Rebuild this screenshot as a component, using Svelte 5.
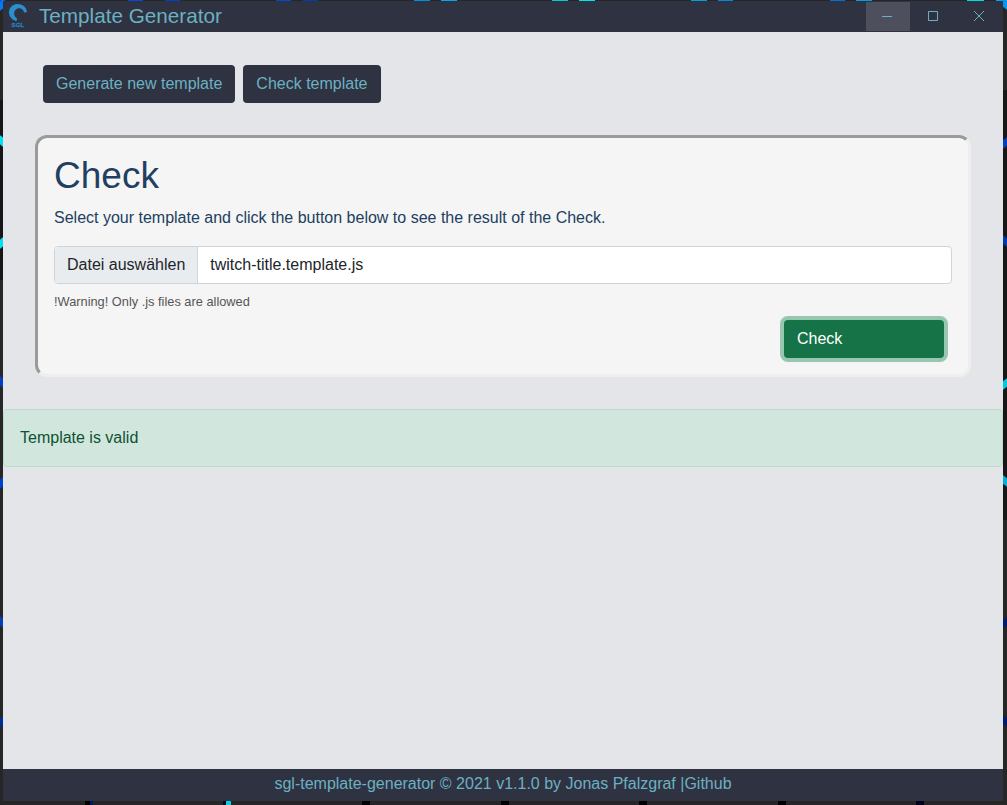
<script>
  const topGlows = [
    [0, 5, '#0a4fe0'], [128, 15, '#0048e0'], [165, 15, '#0040c8'],
    [276, 15, '#0048d8'], [303, 15, '#003cae'], [414, 16, '#0090e0'], [441, 16, '#00a8ec'],
    [552, 16, '#00c8e0'], [579, 16, '#00e4e8'], [691, 16, '#00a0e0'], [718, 15, '#0088dc'],
    [830, 15, '#0070d8'], [856, 16, '#00a0e0'], [967, 17, '#00dce0'], [996, 11, '#00a8f0']
  ];
  const leftGlows = [
    [5, '#0878f0', 1], [141, '#00e0f0', -1], [243, '#00e0f0', 1], [382, '#0040c8', -1],
    [483, '#0040d0', 1], [622, '#0040c0', -1], [722, '#002c98', 1]
  ];
  const rightGlows = [
    [4, '#0098f0', -1], [143, '#0040c0', 1], [241, '#0038b0', -1], [384, '#00c8e0', 1],
    [481, '#00b0d8', -1], [623, '#001c70', 1], [721, '#001c70', -1]
  ];
  const bottomGlows = [
    [85, 5, '#000'], [90, 3, '#001c60'], [223, 3, '#000c20'], [226, 5, '#00d0e0'],
    [362, 8, '#000'], [501, 8, '#000'], [639, 8, '#000'], [778, 8, '#000'], [916, 8, '#00001c']
  ];
  let fileName = 'twitch-title.template.js';
</script>

<div class="desktop">
  <svg class="wallpaper" viewBox="0 0 1007 805" aria-hidden="true">
    <rect width="1007" height="805" fill="#262626" />
    <rect x="0" y="100" width="3" height="180" fill="#161616" />
    <rect x="1003" y="90" width="4" height="430" fill="#171717" />
    {#each topGlows as [x, w, color]}
      <rect {x} y="0" width={w} height="1" fill={color} />
    {/each}
    {#each leftGlows as [y, color, d]}
      <path d={`M-2 ${y + 3 * d}L5 ${y - 3 * d}`} stroke={color} stroke-width="7" />
    {/each}
    {#each rightGlows as [y, color, d]}
      <path d={`M1001 ${y + 3 * d}L1009 ${y - 3 * d}`} stroke={color} stroke-width="7" />
    {/each}
    {#each bottomGlows as [x, w, color]}
      <rect {x} y="801" width={w} height="4" fill={color} />
    {/each}
  </svg>

  <div class="window">
    <header>
      <svg class="logo" viewBox="0 0 20 26" aria-hidden="true">
        <path d="M19 9.2 16.2 9.6 15 7 12.4 5.2 9.2 5.4 6.8 7.4 6 10.4 6.9 13.4 9.1 15.6 8.4 18.2 4.6 16.4 1.8 13.2 .8 9.4 1.7 5.6 4.4 2.6 8 1.1 12 1.2 15.6 2.8 18 5.6Z" fill="#2c8fcc" />
        <text x="3.6" y="24.4" textLength="12.8" lengthAdjust="spacingAndGlyphs">SGL</text>
      </svg>
      <span class="title">Template Generator</span>
      <div class="controls">
        <button class="active" aria-label="Minimize"><svg viewBox="0 0 10 10"><path d="M0 5.5H10" /></svg></button>
        <button aria-label="Maximize"><svg viewBox="0 0 10 10"><path d="M.5.5H9.5V9.5H.5Z" /></svg></button>
        <button aria-label="Close"><svg viewBox="0 0 10 10"><path d="M0 0 10 10M10 0 0 10" /></svg></button>
      </div>
    </header>

    <main>
      <nav>
        <button class="btn">Generate new template</button>
        <button class="btn">Check template</button>
      </nav>

      <section>
        <h1>Check</h1>
        <p>Select your template and click the button below to see the result of the Check.</p>
        <div class="file">
          <span class="choose">Datei auswählen</span>
          <span class="name">{fileName}</span>
        </div>
        <div class="hint">!Warning! Only .js files are allowed</div>
        <button class="btn submit">Check</button>
      </section>

      <div class="alert">Template is valid</div>
    </main>

    <footer>sgl-template-generator © 2021 v1.1.0 by Jonas Pfalzgraf |<span>Github</span></footer>
  </div>
</div>

<style>
  :global(body) { margin: 0; overflow: hidden; }
  .desktop {
    position: relative;
    box-sizing: border-box;
    width: 1007px;
    height: 805px;
    padding: 1px 4px 4px 3px;
    font: 16px/24px "Liberation Sans", Arial, sans-serif;
  }
  .wallpaper { position: absolute; inset: 0; width: 1007px; height: 805px; }
  .window {
    position: relative;
    display: flex;
    flex-direction: column;
    height: 800px;
    background: #e4e5e9;
  }
  header {
    display: flex;
    flex: none;
    height: 31px;
    background: #2f3241;
    color: #6bb1c2;
  }
  .logo { width: 20px; height: 26px; margin: 2px 0 0 5px; }
  .logo text {
    font: bold 6px "Liberation Sans", Arial, sans-serif;
    fill: #2480ba;
    stroke: #2480ba;
    stroke-width: .3;
  }
  .title { margin-left: 11px; font-size: 20.7px; line-height: 30px; }
  .controls { display: flex; gap: 2px; margin-left: auto; padding: 1px 1px 1px 0; }
  .controls button {
    display: flex;
    align-items: center;
    justify-content: center;
    width: 44px;
    height: 29px;
    padding: 0 2px 1px 0;
    border: 0;
    background: none;
  }
  .controls button.active { background: #4d4f5c; }
  .controls svg { width: 10px; height: 10px; fill: none; stroke: #6bb1c2; stroke-width: 1; }
  main { flex: 1; }
  nav { display: flex; gap: 8px; padding: 33px 40px 32px; }
  .btn {
    height: 38px;
    padding: 0 13px;
    border: 0;
    border-radius: 4px;
    background: #2f3241;
    color: #6bb1c2;
    font: inherit;
    text-align: left;
  }
  section {
    display: flex;
    flex-direction: column;
    box-sizing: border-box;
    width: 936px;
    height: 242px;
    margin: 0 32px 32px;
    padding: 16px;
    border: 3px solid;
    border-color: #9a9a9a #eee #eee #9a9a9a;
    border-radius: 12px;
    background: #f5f5f5;
    color: #213f60;
  }
  h1 { margin: 0 0 8px; font-size: 37px; font-weight: 400; line-height: 44px; }
  p { margin: 0 0 16px; }
  .file {
    display: flex;
    box-sizing: border-box;
    height: 38px;
    border: 1px solid #ced4da;
    border-radius: 4px;
    overflow: hidden;
    background: #fff;
    color: #212529;
    line-height: 36px;
  }
  .choose { padding: 0 12px; border-right: 1px solid #ced4da; background: #e9ecef; }
  .name { padding-left: 12px; }
  .hint { margin: 8px 0; color: #555; font-size: 12.8px; line-height: 20px; }
  .submit {
    flex: none;
    align-self: flex-end;
    width: 160px;
    margin-right: 8px;
    background: #157347;
    box-shadow: 0 0 0 4px #98c7b0;
    color: #fff;
  }
  .alert {
    box-sizing: border-box;
    height: 58px;
    padding: 16px;
    border: 1px solid #badbcc;
    border-radius: 4px;
    background: #d1e7dd;
    color: #0f5132;
  }
  footer {
    flex: none;
    height: 32px;
    background: #2f3241;
    color: #6bb1c2;
    line-height: 30px;
    text-align: center;
  }
</style>
